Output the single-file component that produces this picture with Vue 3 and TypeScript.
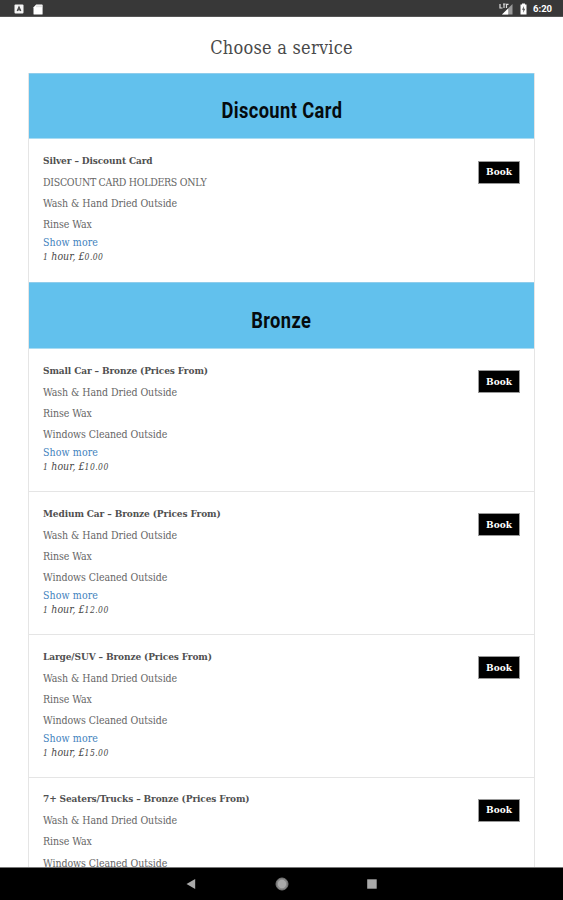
<script setup lang="ts">
interface Service {
  key: string
  name: string
  lines: string[]
  price?: string
}
interface Category {
  key: string
  title: string
  services: Service[]
}

const bronzeLines: string[] = ['Wash & Hand Dried Outside', 'Rinse Wax', 'Windows Cleaned Outside']

const categories: Category[] = [
  {
    key: 'discount',
    title: 'Discount Card',
    services: [
      {
        key: 'silver',
        name: 'Silver – Discount Card',
        lines: ['DISCOUNT CARD HOLDERS ONLY', 'Wash & Hand Dried Outside', 'Rinse Wax'],
        price: '0.00',
      },
    ],
  },
  {
    key: 'bronze',
    title: 'Bronze',
    services: [
      { key: 'small', name: 'Small Car – Bronze (Prices From)', lines: bronzeLines, price: '10.00' },
      { key: 'medium', name: 'Medium Car – Bronze (Prices From)', lines: bronzeLines, price: '12.00' },
      { key: 'large', name: 'Large/SUV – Bronze (Prices From)', lines: bronzeLines, price: '15.00' },
      { key: 'seaters', name: '7+ Seaters/Trucks – Bronze (Prices From)', lines: bronzeLines },
    ],
  },
]
</script>

<template>
  <div class="screen">
    <header class="status">
      <svg class="app-icon" width="10" height="10" viewBox="0 0 10 10">
        <rect x="0.5" y="0.5" width="9" height="9" rx="1" fill="#f4f4f4" />
        <path d="M3.2 7 5 3l1.8 4M3.9 5.8h2.2" fill="none" stroke="#444" stroke-width="1.2" />
      </svg>
      <svg class="sd-icon" width="10" height="11" viewBox="0 0 10 11">
        <path d="M3.2 0.5H9Q9.6 .5 9.6 1.2V10Q9.6 10.6 9 10.6H1.2Q.5 10.6 .5 10V3.3Z" fill="#fff" />
        <path d="M4 1.5v1.7M6 1.5v1.7M8 1.5v1.7" stroke="#aaa" stroke-width=".7" />
      </svg>
      <span class="grow"></span>
      <svg class="signal" width="14" height="12" viewBox="0 0 14 12">
        <path d="M13.5 1v10.5H3Z" fill="#9a9a9a" />
        <path d="M9.2 5.5v6H3Z" fill="#fff" />
        <path d="M1 1v4h2.5M4 1h2.5M5 1v4M7.5 5V1.3h2" fill="none" stroke="#ddd" stroke-width="1.2" />
      </svg>
      <svg class="battery" width="7" height="12" viewBox="0 0 7 12">
        <path d="M2 .5h3v1h1.5v10h-6v-10H2Z" fill="#fff" />
        <path d="M4 3 2 6.7h1.3V9.7L5.2 5.8H3.8Z" fill="#555" />
      </svg>
      <span class="clock">6:20</span>
    </header>

    <main class="content">
      <h1 class="page-title">Choose a service</h1>
      <div class="list">
        <section v-for="c in categories" :key="c.key">
          <h2 class="category"><span class="category-text">{{ c.title }}</span></h2>
          <article v-for="s in c.services" :key="s.key" class="service">
            <div class="details">
              <h3 class="name">{{ s.name }}</h3>
              <p v-for="line in s.lines" :key="line" class="line" :class="{ caps: line === line.toUpperCase() }">{{ line }}</p>
              <template v-if="s.price">
                <a class="more">Show more</a>
                <p class="price"><span class="num">1</span> hour, £<span class="num">{{ s.price }}</span></p>
              </template>
            </div>
            <button class="book" type="button">Book</button>
          </article>
        </section>
      </div>
    </main>

    <nav class="navbar">
      <svg width="10" height="12" viewBox="0 0 10 12"><path d="M9.2 1v10L.5 6Z" fill="#aaa" /></svg>
      <svg width="14" height="14" viewBox="0 0 14 14">
        <circle cx="7" cy="7" r="6" fill="#888" stroke="#777" stroke-width="1" />
        <circle cx="7" cy="7" r="4.2" fill="#aaa" />
      </svg>
      <svg width="10" height="10" viewBox="0 0 10 10"><rect x=".2" y=".3" width="9.5" height="9.4" fill="#aaa" /></svg>
    </nav>
  </div>
</template>

<style>
body {
  background: #fff;
}
</style>

<style scoped>
.screen {
  width: 563px;
  height: 900px;
  display: flex;
  flex-direction: column;
  overflow: hidden;
  background: #fff;
  font-family: "DejaVu Serif Condensed", "DejaVu Serif", serif;
  font-stretch: condensed;
  color: #555;
}
h1, h2, h3, p {
  margin: 0;
  font-weight: 400;
}
.status {
  flex: none;
  box-sizing: border-box;
  height: 17px;
  background: #383838;
  border-bottom: 1px solid #555;
  display: flex;
  align-items: center;
  padding: 2px 11px 0 14px;
}
.sd-icon {
  margin-left: 9px;
}
.grow {
  flex: 1;
}
.signal {
  margin-right: 2px;
}
.battery {
  margin: 0 6px 0 5px;
}
.clock {
  font: 700 9.5px/12px Roboto, sans-serif;
  color: #fff;
  width: 19px;
  white-space: nowrap;
}
.content {
  flex: 1;
  min-height: 0;
  overflow: hidden;
  padding: 0 28px;
}
.page-title {
  height: 55.6px;
  box-sizing: border-box;
  padding-top: 19px;
  font-size: 18px;
  line-height: 24px;
  letter-spacing: 0.25px;
  text-align: center;
  color: #4a4a4a;
}
.list {
  border: solid #e5e5e5;
  border-width: 0 1px;
}
.category {
  box-sizing: border-box;
  height: 66.6px;
  padding-top: 11px;
  background: #62c1ed;
  border-top: 1px solid #8fcdec;
  border-bottom: 1px solid #a9dcf3;
  display: flex;
  align-items: center;
  justify-content: center;
}
.category-text {
  font: 700 22px/30px Roboto, sans-serif;
  letter-spacing: 0.5px;
  color: #050b0e;
  transform: scaleX(0.83);
}
.service {
  box-sizing: border-box;
  height: 142.75px;
  padding: 15px 14px 0;
  display: flex;
  justify-content: space-between;
  align-items: flex-start;
}
.service + .service {
  border-top: 1px solid #e5e5e5;
  padding-top: 14.5px;
}
.details {
  display: flex;
  flex-direction: column;
  font-size: 10.5px;
  line-height: 14px;
  white-space: nowrap;
  align-items: flex-start;
}
.name {
  font-size: 10px;
  line-height: 14px;
  letter-spacing: -0.11px;
  font-weight: 700;
  color: #505050;
}
.line {
  margin-top: 7.1px;
  letter-spacing: -0.06px;
  color: #666;
}
.caps {
  letter-spacing: -0.3px;
}
.more {
  margin-top: 4px;
  letter-spacing: 0.1px;
  color: #3f82bd;
}
.price {
  font-style: italic;
  color: #4a4a4a;
}
.num {
  font-size: 8.5px;
  letter-spacing: 0.45px;
}
.book {
  box-sizing: border-box;
  width: 42px;
  height: 23px;
  margin-top: 6.5px;
  padding: 0;
  background: #000;
  border: 1px solid #999;
  color: #fff;
  font: 700 10px/14px "DejaVu Serif", serif;
  font-stretch: condensed;
}
.navbar {
  flex: none;
  box-sizing: border-box;
  height: 33px;
  background: #000;
  border-top: 1px solid #777;
  display: flex;
  justify-content: center;
  align-items: center;
  gap: 78.5px;
}
</style>
